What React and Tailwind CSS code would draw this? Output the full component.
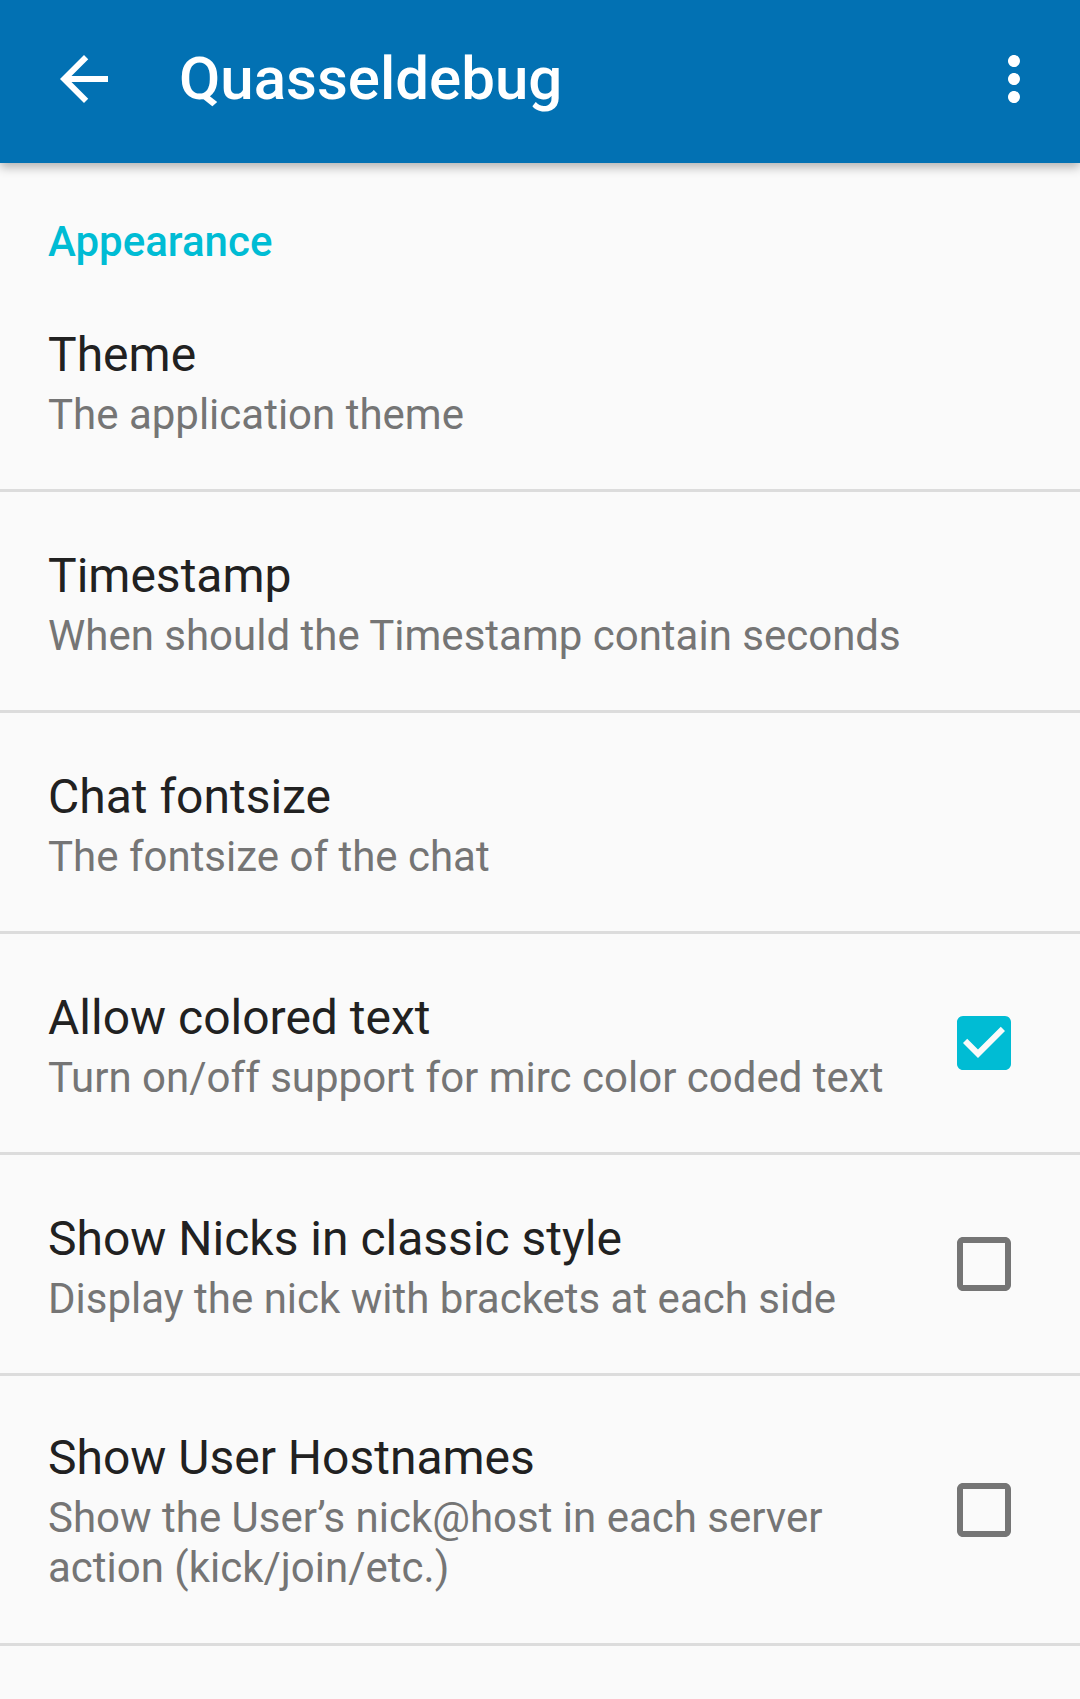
import React from 'react';

const prefs = [
  { title: 'Theme', summary: 'The application theme' },
  { title: 'Timestamp', summary: 'When should the Timestamp contain seconds' },
  { title: 'Chat fontsize', summary: 'The fontsize of the chat' },
  { title: 'Allow colored text', summary: 'Turn on/off support for mirc color coded text', checkbox: true, checked: true },
  { title: 'Show Nicks in classic style', summary: 'Display the nick with brackets at each side', checkbox: true, checked: false },
  {
    title: 'Show User Hostnames',
    summary: 'Show the User’s nick@host in each server action (kick/join/etc.)',
    checkbox: true,
    checked: false,
    tall: true,
  },
];

const CheckBox = ({ checked }) => (
  <svg width="54" height="54" viewBox="3 3 18 18" className="shrink-0">
    {checked ? (
      <path
        fill="#00bcd4"
        d="M19 3H5c-1.11 0-2 .9-2 2v14c0 1.1.89 2 2 2h14c1.11 0 2-.9 2-2V5c0-1.1-.89-2-2-2zm-9 14l-5-5 1.41-1.41L10 14.17l7.59-7.59L19 8l-9 9z"
      />
    ) : (
      <path
        fill="#757575"
        d="M19 5v14H5V5h14m0-2H5c-1.11 0-2 .9-2 2v14c0 1.1.89 2 2 2h14c1.1 0 2-.9 2-2V5c0-1.1-.9-2-2-2z"
      />
    )}
  </svg>
);

const PrefRow = ({ pref }) => (
  <>
    <div className="flex items-center pl-[48px] pr-[69px]">
      <div className={`flex-1 min-w-0 ${pref.tall ? 'pt-[52px] pb-[50px]' : 'pt-[54px] pb-[49px]'}`}>
        <div className="text-[48px] leading-[59px] text-[#212121]">{pref.title}</div>
        <div className="mt-[6px] text-[42px] leading-[50px] text-[#757575]">{pref.summary}</div>
      </div>
      {pref.checkbox && (
        <div className="ml-[48px]">
          <CheckBox checked={pref.checked} />
        </div>
      )}
    </div>
    <div className="h-[3px] bg-[#dcdcdc]" />
  </>
);

export default function App() {
  return (
    <div className="min-h-[1699px] bg-[#fafafa] font-['Roboto',sans-serif]">
      <header className="relative z-10 flex h-[163px] items-center bg-[#0271b3] pb-[5px] text-white shadow-[0_4px_10px_rgba(0,0,0,0.3)]">
        <svg width="72" height="72" viewBox="0 0 24 24" className="ml-[48px] shrink-0">
          <path fill="#fff" d="M20 11H7.83l5.59-5.59L12 4l-8 8 8 8 1.41-1.41L7.83 13H20v-2z" />
        </svg>
        <h1 className="ml-[59px] text-[60px] font-medium leading-[70px]">Quasseldebug</h1>
        <svg width="72" height="72" viewBox="0 0 24 24" className="ml-auto mr-[30px] shrink-0">
          <path
            fill="#fff"
            d="M12 8c1.1 0 2-.9 2-2s-.9-2-2-2-2 .9-2 2 .9 2 2 2zm0 2c-1.1 0-2 .9-2 2s.9 2 2 2 2-.9 2-2-.9-2-2-2zm0 6c-1.1 0-2 .9-2 2s.9 2 2 2 2-.9 2-2-.9-2-2-2z"
          />
        </svg>
      </header>

      <div className="px-[48px] pt-[54px] pb-[4px] text-[42px] font-medium leading-[50px] text-[#00bcd4]">
        Appearance
      </div>

      {prefs.map((pref) => (
        <PrefRow key={pref.title} pref={pref} />
      ))}
    </div>
  );
}
